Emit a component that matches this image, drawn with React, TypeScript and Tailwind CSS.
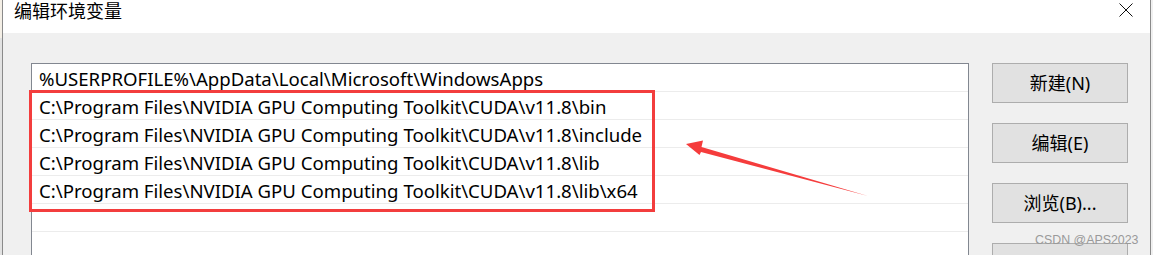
const paths = [
  '%USERPROFILE%\\AppData\\Local\\Microsoft\\WindowsApps',
  'C:\\Program Files\\NVIDIA GPU Computing Toolkit\\CUDA\\v11.8\\bin',
  'C:\\Program Files\\NVIDIA GPU Computing Toolkit\\CUDA\\v11.8\\include',
  'C:\\Program Files\\NVIDIA GPU Computing Toolkit\\CUDA\\v11.8\\lib',
  'C:\\Program Files\\NVIDIA GPU Computing Toolkit\\CUDA\\v11.8\\lib\\x64',
  '',
  '',
];

const buttons = ['新建(N)', '编辑(E)', '浏览(B)...', ''];

export default function App() {
  return (
    <div
      className="relative w-[1153px] h-[255px] flex overflow-hidden bg-white text-black"
      style={{ fontFamily: '"Noto Sans", "Noto Sans CJK SC", sans-serif' }}
    >
      {/* window behind, barely visible */}
      <div className="w-[2px] shrink-0 bg-[#e2e2e2] flex flex-col">
        <div className="h-[38px] bg-[#f4efe6]" />
      </div>

      {/* dialog */}
      <div className="flex-1 flex flex-col border-l border-r border-[#8a8a8a]">
        <div className="h-[33px] shrink-0 bg-white flex items-start justify-between pl-[11px] pr-[17px]">
          <span className="text-[18px] leading-[20px] font-['Noto_Sans_CJK_SC']">编辑环境变量</span>
          <svg width="14" height="14" viewBox="0 0 14 14" className="mt-[3px]">
            <path d="M0.5 0.5 L13.5 13.5 M13.5 0.5 L0.5 13.5" stroke="#111" strokeWidth="1" />
          </svg>
        </div>

        <div className="flex-1 bg-[#f0f0f0] flex pt-[30px] pl-[28px]">
          <div className="w-[938px] shrink-0 bg-white border border-b-0 border-[#828790]">
            {paths.map((p, i) => (
              <div key={i} className="h-[28px] border-b border-[#ececec] pl-[7px] text-[18.6px] leading-[29px] whitespace-nowrap">
                {p}
              </div>
            ))}
          </div>

          <div className="ml-[23px] flex flex-col gap-[20px]">
            {buttons.map((b, i) => (
              <div
                key={i}
                className="w-[136px] h-[40px] shrink-0 bg-[#e1e1e1] border border-[#adadad] flex items-center justify-center text-[18px]"
              >
                {b}
              </div>
            ))}
          </div>
        </div>
      </div>
      <div className="w-[2px] shrink-0 bg-[#f0f0f0]" />

      {/* annotation overlays */}
      <div className="absolute left-[29px] top-[90px] w-[626px] h-[122px] border-[3.5px] border-[#f33d3d] pointer-events-none" />
      <svg className="absolute left-0 top-0 pointer-events-none" width="1153" height="255" viewBox="0 0 1153 255">
        <polygon
          points="686,144 703,140.5 701.5,147 868,196 701,152 699.5,155"
          fill="#f53c3c"
        />
      </svg>
      <span
        className="absolute left-[1035px] top-[233px] text-[12.4px] leading-[15px] text-[#9a9a9a]"
        style={{ fontFamily: '"Liberation Sans", Arial, sans-serif' }}
      >
        CSDN @APS2023
      </span>
    </div>
  );
}
